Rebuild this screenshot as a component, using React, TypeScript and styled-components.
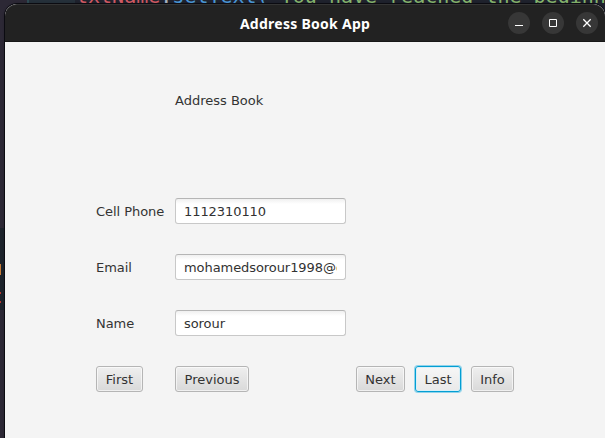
import React from "react";
import styled, { createGlobalStyle } from "styled-components";

const Global = createGlobalStyle`
  * { box-sizing: border-box; }
  html, body { margin: 0; overflow: hidden; background: #2c2835; }
`;

const Desktop = styled.div`
  position: relative;
  width: 605px;
  height: 438px;
  padding: 4px 0 0 5px;
  overflow: hidden;
  background: #2c2835;
`;

const Editor = styled.div`
  position: absolute;
  inset: 0 0 auto 27px;
  height: 20px;
  background: linear-gradient(90deg, #2d4a52 0 2px, #25303a 2px 48px, #1f222d 48px);
`;

const Code = styled.pre`
  position: absolute;
  left: 49px;
  top: -14px;
  margin: 0;
  font: 20px/20px "DejaVu Sans Mono", monospace;
  color: #86b56d;
`;

const Token = styled.span<{ $color: string }>`
  color: ${(p) => p.$color};
`;

const SideStrip = styled.div`
  position: absolute;
  left: 0;
  top: 228px;
  width: 5px;
  height: 82px;
  background: #1d232b;
`;

const Mark = styled.i<{ $top: number; $height: number; $color: string }>`
  position: absolute;
  left: 0;
  top: ${(p) => p.$top}px;
  width: 1px;
  height: ${(p) => p.$height}px;
  background: ${(p) => p.$color};
`;

const Window = styled.main`
  position: relative;
  width: 600px;
  height: 434px;
  border-radius: 12px 12px 0 0;
  overflow: hidden;
  background: #f4f4f4;
`;

const Frame = styled.div`
  position: relative;
  border-radius: 12px 12px 0 0;
  box-shadow: 0 0 0 1px #0b0b11, 0 0 3px rgba(0, 0, 0, 0.3);
`;

const TitleBar = styled.header`
  display: grid;
  grid-template-columns: 1fr auto 1fr;
  align-items: center;
  height: 38px;
  padding: 0 7px 0 7px;
  background: #222;
  border-top: 1px solid #343434;
  border-bottom: 1px solid #171717;
  border-radius: 12px 12px 0 0;
`;

const Title = styled.h1`
  grid-column: 2;
  margin: 0;
  padding-top: 2px;
  font: bold 14px/20px "Noto Sans", sans-serif;
  letter-spacing: 0.27px;
  color: #fff;
  white-space: nowrap;
`;

const Controls = styled.div`
  display: flex;
  justify-content: flex-end;
  gap: 12px;
`;

const Control = styled.button`
  display: grid;
  place-items: center;
  width: 22px;
  height: 22px;
  padding: 0;
  border: 0;
  border-radius: 50%;
  background: #373737;

  svg { display: block; fill: none; stroke: #fff; }
`;

const Content = styled.section`
  padding: 50px 0 0 91px;
  font: 13px/18px "DejaVu Sans", sans-serif;
  letter-spacing: -0.05px;
  color: #333;
`;

const Heading = styled.div`
  margin: 0 0 88px 79px;
  height: 18px;
  letter-spacing: 0;
`;

const Form = styled.div`
  display: grid;
  grid-template-columns: 79px 171px;
  grid-auto-rows: 26px;
  row-gap: 30px;
  align-items: center;
`;

const Label = styled.label`
  padding-top: 2px;
  white-space: nowrap;
`;

const Field = styled.input`
  width: 171px;
  height: 26px;
  padding: 0 8px;
  border: 1px solid #c8c8c8;
  border-top-color: #b5b5b5;
  border-radius: 3px;
  background: linear-gradient(#f0f0f0, #fff 5px);
  font: inherit;
  letter-spacing: -0.07px;
  color: #323232;
  outline: none;
`;

const Actions = styled.div`
  display: grid;
  grid-template-columns: 79px 181px 59px 56px 43px;
  justify-items: start;
  margin-top: 30px;
`;

const Action = styled.button<{ $width: number; $focused?: boolean }>`
  width: ${(p) => p.$width}px;
  height: 26px;
  padding: 2px 0 0;
  border: 1px solid ${(p) => (p.$focused ? "#039ed3" : "#b5b5b5")};
  border-radius: 3px;
  background: ${(p) =>
    p.$focused ? "linear-gradient(#f6f6f6, #e9e9e9)" : "linear-gradient(#efefef, #d9d9d9)"};
  box-shadow: ${(p) =>
    p.$focused
      ? "inset 0 0 0 1px #d9f0f8, 0 0 0 1px #8fd3eb"
      : "inset 0 0 0 1px rgba(255,255,255,.6)"};
  font: inherit;
  color: #333;
`;

const fields = [
  { id: "phone", label: "Cell Phone", value: "1112310110" },
  { id: "email", label: "Email", value: "mohamedsorour1998@gmail.com" },
  { id: "name", label: "Name", value: "sorour" },
];

const actions = [
  { label: "First", width: 47 },
  { label: "Previous", width: 74 },
  { label: "Next", width: 49 },
  { label: "Last", width: 46, focused: true },
  { label: "Info", width: 43 },
];

export default function App() {
  return (
    <>
      <Global />
      <Desktop>
        <Editor>
          <Code>
            <Token $color="#d25a63">txtName</Token>
            <Token $color="#a9b4c2">.</Token>
            <Token $color="#4a98d8">setText(</Token>
            {'"You have reached the beginning'}
          </Code>
        </Editor>
        <SideStrip>
          <Mark $top={36} $height={11} $color="#c77b37" />
          <Mark $top={64} $height={2} $color="#b8372f" />
          <Mark $top={73} $height={2} $color="#b8372f" />
        </SideStrip>
        <Frame>
          <Window>
            <TitleBar>
              <Title>Address Book App</Title>
              <Controls>
                <Control aria-label="Minimize">
                  <svg width="10" height="10"><path d="M1 7.5h8" /></svg>
                </Control>
                <Control aria-label="Maximize">
                  <svg width="10" height="10"><path d="M1.5 1.5h7v7h-7z" /></svg>
                </Control>
                <Control aria-label="Close">
                  <svg width="10" height="10"><path d="M1.3 1.3l7.4 7.4M8.7 1.3L1.3 8.7" strokeWidth="1.3" /></svg>
                </Control>
              </Controls>
            </TitleBar>
            <Content>
              <Heading>Address Book</Heading>
              <Form>
                {fields.map((f) => (
                  <React.Fragment key={f.id}>
                    <Label htmlFor={f.id}>{f.label}</Label>
                    <Field id={f.id} defaultValue={f.value} />
                  </React.Fragment>
                ))}
              </Form>
              <Actions>
                {actions.map((a) => (
                  <Action key={a.label} $width={a.width} $focused={a.focused}>
                    {a.label}
                  </Action>
                ))}
              </Actions>
            </Content>
          </Window>
        </Frame>
      </Desktop>
    </>
  );
}
